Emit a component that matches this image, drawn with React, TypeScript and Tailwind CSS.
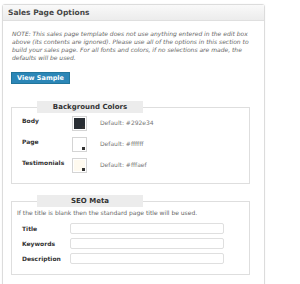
const font = { fontFamily: '"DejaVu Sans", Verdana, sans-serif' };

function Swatch({ color }: { color: string }) {
  return (
    <div className="relative h-[15px] w-[15px] border border-[#d4d4d4] bg-white p-[1px]">
      <div className="h-full w-full" style={{ backgroundColor: color }} />
      <div className="absolute bottom-[1px] right-[1px] h-[3px] w-[3px] bg-[#333]" />
    </div>
  );
}

function Legend({ children }: { children: React.ReactNode }) {
  return (
    <legend className="ml-[15px] h-[12px] w-[106px] bg-[#ececec] text-[7px] font-bold leading-[12px] text-[#333]">
      <div className="w-full text-center">{children}</div>
    </legend>
  );
}

const colors = [
  { label: "Body", color: "#292e34", def: "#292e34" },
  { label: "Page", color: "#ffffff", def: "#ffffff" },
  { label: "Testimonials", color: "#fffaef", def: "#fffaef" },
];

export default function App() {
  return (
    <div className="h-[284px] w-[300px] overflow-hidden bg-white pl-[2px] pt-[4px]" style={font}>
      <div className="h-[300px] w-[263px] rounded-t-[3px] border border-[#dcdcdc] bg-white shadow-[0_0_2px_rgba(0,0,0,0.06)]">
        <div className="h-[16px] border-b border-[#dfdfdf] bg-gradient-to-b from-[#f9f9f9] to-[#ececec] pl-[5px] text-[7.5px] font-bold leading-[16px] text-[#464646]">
          Sales Page Options
        </div>
        <div className="px-[8px]">
          <p className="mt-[9px] pl-[1px] pr-[2px] text-[6px] italic leading-[8px] text-[#666]">
            NOTE: This sales page template does not use anything entered in the edit box above (its contents are ignored). Please use all of the options in this section to build your sales page. For all fonts and colors, if no selections are made, the defaults will be used.
          </p>
          <button className="mt-[10px] h-[12px] w-[59px] border border-[#21759b] bg-[#2b86b7] text-[6.5px] font-bold leading-[10px] text-white">
            View Sample
          </button>

          <fieldset className="mt-[14px] w-[239px] border border-[#dedede] px-[10px] pb-[10px] pt-[3px]">
            <Legend>Background Colors</Legend>
            <div className="flex flex-col gap-[6px]">
              {colors.map((c) => (
                <div key={c.label} className="flex items-start">
                  <span className="w-[50px] pt-[1px] text-[6px] font-bold leading-[8px] text-[#333]">{c.label}</span>
                  <Swatch color={c.color} />
                  <span className="ml-[13px] pt-[3px] text-[6px] leading-[8px] text-[#777]">Default: {c.def}</span>
                </div>
              ))}
            </div>
          </fieldset>

          <fieldset className="mt-[11px] w-[239px] border border-[#dedede] px-[10px] pb-[10px] pt-[2px]">
            <Legend>SEO Meta</Legend>
            <p className="-ml-[5px] text-[6px] leading-[8px] text-[#666]">
              If the title is blank then the standard page title will be used.
            </p>
            <div className="mt-[6px] flex flex-col gap-[4px]">
              {["Title", "Keywords", "Description"].map((l) => (
                <div key={l} className="flex items-center">
                  <span className="w-[48px] text-[6px] font-bold leading-[8px] text-[#333]">{l}</span>
                  <div className="h-[11px] w-[154px] rounded-[2px] border border-[#dfdfdf] bg-white" />
                </div>
              ))}
            </div>
          </fieldset>
        </div>
      </div>
    </div>
  );
}
